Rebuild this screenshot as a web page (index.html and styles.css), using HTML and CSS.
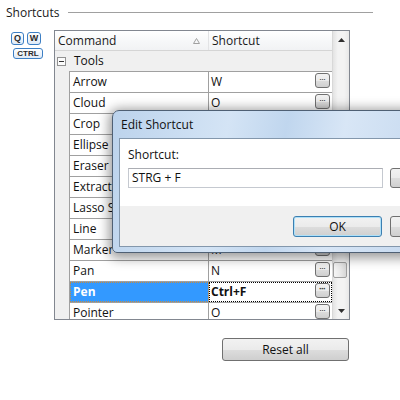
FILE: index.html
```html
<!DOCTYPE html>
<html>
<head>
<meta charset="utf-8">
<link rel="stylesheet" href="styles.css">
</head>
<body>
<div class="page">
  <div class="section-head">
    <span class="section-title">Shortcuts</span>
    <div class="rule"></div>
  </div>
  <div class="content">
    <div class="keys">
      <div class="keyrow">
        <div class="key">Q</div>
        <div class="key">W</div>
      </div>
      <div class="key key-wide">CTRL</div>
    </div>
    <div class="grid-col">
      <div class="grid">
        <div class="grid-main">
          <div class="grid-header">
            <div class="h-cell h-command">Command
              <svg class="sort" width="7" height="6" viewBox="0 0 7 6"><path d="M3.5 0.5 L6.5 5.5 L0.5 5.5 Z" fill="none" stroke="#a0a0a0" stroke-width="1"/></svg>
            </div>
            <div class="h-cell h-shortcut">Shortcut</div>
          </div>
          <div class="group-row">
            <span class="toggle"><span class="minus"></span></span>
            <span>Tools</span>
          </div>
          <div class="row"><div class="c-cmd">Arrow</div><div class="c-key"><span class="kval">W</span><span class="ell">···</span></div></div>
          <div class="row"><div class="c-cmd">Cloud</div><div class="c-key"><span class="kval">O</span><span class="ell">···</span></div></div>
          <div class="row"><div class="c-cmd">Crop</div><div class="c-key"><span class="kval">C</span><span class="ell">···</span></div></div>
          <div class="row"><div class="c-cmd">Ellipse</div><div class="c-key"><span class="kval">E</span><span class="ell">···</span></div></div>
          <div class="row"><div class="c-cmd">Eraser</div><div class="c-key"><span class="kval">E</span><span class="ell">···</span></div></div>
          <div class="row"><div class="c-cmd">Extract Text</div><div class="c-key"><span class="kval">T</span><span class="ell">···</span></div></div>
          <div class="row"><div class="c-cmd">Lasso Select</div><div class="c-key"><span class="kval">L</span><span class="ell">···</span></div></div>
          <div class="row"><div class="c-cmd">Line</div><div class="c-key"><span class="kval">L</span><span class="ell">···</span></div></div>
          <div class="row"><div class="c-cmd">Marker</div><div class="c-key"><span class="kval">M</span><span class="ell">···</span></div></div>
          <div class="row"><div class="c-cmd">Pan</div><div class="c-key"><span class="kval">N</span><span class="ell">···</span></div></div>
          <div class="row selected"><div class="c-cmd">Pen</div><div class="c-key"><span class="kval">Ctrl+F</span><span class="ell">···</span></div></div>
          <div class="row"><div class="c-cmd">Pointer</div><div class="c-key"><span class="kval">O</span><span class="ell">···</span></div></div>
        </div>
        <div class="scrollbar">
          <div class="sb-btn"><svg width="7" height="4" viewBox="0 0 7 4"><path d="M0 4 L3.5 0 L7 4 Z" fill="#303030"/></svg></div>
          <div class="sb-track"><div class="thumb"></div></div>
          <div class="sb-btn"><svg width="7" height="4" viewBox="0 0 7 4"><path d="M0 0 L3.5 4 L7 0 Z" fill="#303030"/></svg></div>
        </div>
      </div>
      <div class="btn reset">Reset all</div>
    </div>
  </div>
</div>

<div class="dialog">
  <div class="dlg-title">Edit Shortcut</div>
  <div class="dlg-client">
    <div class="dlg-body">
      <div class="dlg-label">Shortcut:</div>
      <div class="dlg-inputrow">
        <div class="dlg-input">STRG + F</div>
        <div class="btn side"></div>
      </div>
    </div>
    <div class="dlg-footer">
      <div class="btn default">OK</div>
      <div class="btn cancel"></div>
    </div>
  </div>
</div>
</body>
</html>
```

FILE: styles.css
```css
* { box-sizing: border-box; }
html, body { margin: 0; padding: 0; overflow: hidden; }
body {
  width: 400px;
  height: 400px;
  background: #ffffff;
  font-family: "Open Sans", "Liberation Sans", sans-serif;
  font-size: 12px;
  color: #111;
  position: relative;
}
.page { padding: 4px 0 0 6px; }

.section-head { display: flex; align-items: center; height: 17px; }
.section-title { line-height: 17px; color: #1a1a1a; }
.rule { flex: 1; height: 1px; background: #a0a0a0; margin: 0 27px 0 9px; }

.content { display: flex; margin-top: 9px; }

.keys { width: 48px; padding: 2px 0 0 5px; }
.keyrow { display: flex; gap: 3px; }
.key {
  width: 13px; height: 13px;
  border: 1px solid #3d7fc4;
  border-radius: 3px;
  background: linear-gradient(#ffffff, #dfeaf7);
  font-family: "Liberation Sans", sans-serif;
  font-weight: bold;
  font-size: 9px;
  line-height: 11px;
  text-align: center;
  color: #2a2a2a;
}
.key + .key { width: 14px; }
.key-wide { width: 30px; height: 11px; margin: 3px 0 0 2px; font-size: 8px; line-height: 9px; }

.grid-col { display: flex; flex-direction: column; align-items: flex-end; width: 296px; }
.grid {
  width: 296px; height: 290px;
  border: 1px solid #828790;
  display: flex;
}
.grid-main { width: 277px; overflow: hidden; background: #f0f0f0; }

.grid-header {
  display: flex;
  height: 20px;
  border-bottom: 1px solid #d5d5d5;
  background: linear-gradient(#ffffff, #f7f8f9 50%, #f1f2f4);
}
.h-cell { line-height: 19px; color: #1a1a1a; }
.h-command {
  width: 154px;
  padding-left: 3px;
  border-right: 1px solid #e2e3e5;
  display: flex;
  align-items: center;
}
.sort { margin-left: auto; margin-right: 8px; }
.h-shortcut { padding-left: 3px; }

.group-row {
  height: 20px;
  display: flex;
  align-items: center;
  background: #f0f0f0;
  line-height: 20px;
}
.toggle {
  width: 9px; height: 9px;
  margin: 0 8px 0 2px;
  border: 1px solid #919191;
  background: #fbfbfb;
  display: flex; align-items: center; justify-content: center;
}
.minus { width: 5px; height: 1px; background: #333; }

.row {
  display: flex;
  height: 21px;
  margin-left: 14px;
  border-top: 1px solid #a0a0a0;
  border-left: 1px solid #a0a0a0;
  background: #ffffff;
  line-height: 20px;
}
.c-cmd {
  width: 139px;
  padding-left: 3px;
  border-right: 1px solid #a0a0a0;
  white-space: nowrap;
  overflow: hidden;
}
.c-key { flex: 1; display: flex; padding-left: 2px; }
.kval { flex: 1; }
.ell {
  width: 15px; height: 15px;
  margin: 1px 2px 0 0;
  border: 1px solid #707070;
  border-radius: 3px;
  background: linear-gradient(#f2f2f2, #ebebeb 50%, #dddddd 51%, #cfcfcf);
  font-family: "Liberation Sans", sans-serif;
  font-size: 9px;
  line-height: 11px;
  text-align: center;
  color: #333;
  letter-spacing: -1px;
  padding-right: 1px;
}
.selected .c-cmd {
  background: #3399ff;
  color: #fff;
  font-weight: bold;
  outline: 1px dotted #c88b3c;
  outline-offset: -1px;
}
.selected .c-key {
  font-weight: bold;
  outline: 1px dotted #000;
  outline-offset: -1px;
}

.scrollbar {
  width: 17px;
  display: flex;
  flex-direction: column;
  border-left: 1px solid #d8d8d8;
  background: linear-gradient(to right, #e3e3e3, #f3f3f3 30%, #f3f3f3 70%, #e8e8e8);
}
.sb-btn { height: 17px; display: flex; align-items: center; justify-content: center; }
.sb-track { flex: 1; }
.thumb {
  width: 14px; height: 16px;
  margin: 214px 0 0 0;
  border: 1px solid #9d9d9d;
  border-radius: 2px;
  background: linear-gradient(to right, #f5f5f5, #e9e9e9 50%, #d6d6d6);
}

.btn {
  border: 1px solid #707070;
  border-radius: 3px;
  background: linear-gradient(#f2f2f2, #ebebeb 50%, #dddddd 51%, #cfcfcf);
  text-align: center;
  color: #111;
}
.reset {
  width: 127px; height: 23px;
  margin: 18px 1px 0 0;
  line-height: 21px;
}

.dialog {
  position: absolute;
  left: 112px; top: 110px;
  width: 369px; height: 143px;
  border: 1px solid #4f6074;
  border-radius: 7px 7px 5px 5px;
  padding: 0 6px 5px 6px;
  display: flex;
  flex-direction: column;
  background: linear-gradient(100deg, #bcd3ec 0%, #d4e4f5 30%, #c0d6ee 45%, #d8e6f6 60%, #b9d0ea 100%);
  box-shadow: 0 2px 12px 3px rgba(0,0,0,0.4);
}
.dlg-title { height: 27px; line-height: 27px; padding-left: 2px; color: #111; }
.dlg-client {
  flex: 1;
  border: 1px solid #8397ac;
  background: #fff;
  display: flex;
  flex-direction: column;
}
.dlg-body { height: 67px; padding: 8px 8px 0 8px; }
.dlg-label { line-height: 16px; margin-bottom: 5px; }
.dlg-inputrow { display: flex; gap: 7px; }
.dlg-input {
  flex: 1;
  height: 20px;
  border: 1px solid #c5c9d0;
  border-top-color: #abadb3;
  padding-left: 3px;
  line-height: 18px;
}
.side { width: 75px; height: 20px; line-height: 18px; }
.dlg-footer {
  flex: 1;
  background: #f0f0f0;
  display: flex;
  justify-content: flex-end;
  gap: 8px;
  padding: 10px 8px 0 8px;
}
.default {
  width: 89px; height: 21px; line-height: 19px;
  border-color: #3c7fb1;
  box-shadow: inset 0 0 0 1px #aee0f8;
}
.cancel { width: 75px; height: 21px; line-height: 19px; }
```
